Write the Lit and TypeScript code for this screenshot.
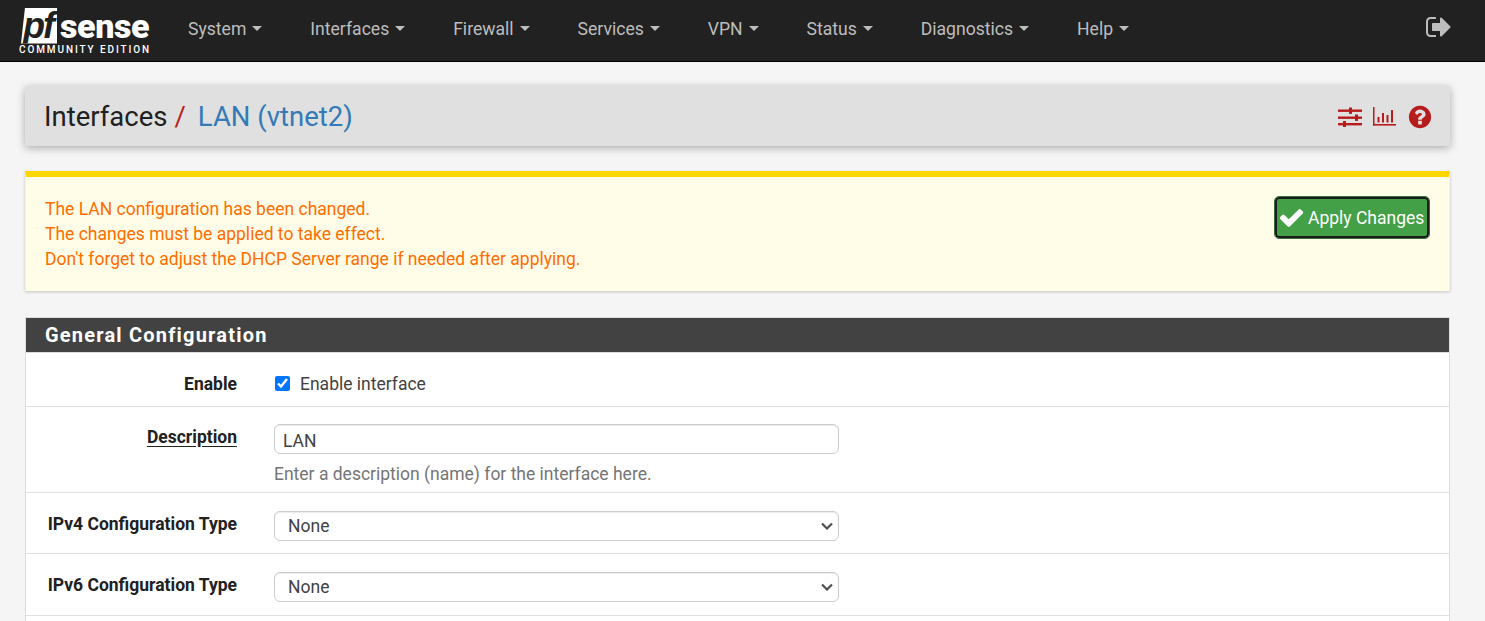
import { LitElement, css, html, svg } from "lit";
import { customElement } from "lit/decorators.js";

const MENU = ["System", "Interfaces", "Firewall", "Services", "VPN", "Status", "Diagnostics", "Help"];

const SIGN_OUT =
  "M704 1440q0 4 1 20t.5 26.5-3 23.5-10 19.5-20.5 6.5h-320q-119 0-203.5-84.5t-84.5-203.5v-704q0-119 84.5-203.5t203.5-84.5h320q13 0 22.5 9.5t9.5 22.5q0 4 1 20t.5 26.5-3 23.5-10 19.5-20.5 6.5h-320q-66 0-113 47t-47 113v704q0 66 47 113t113 47h312l11.5 1 11.5 3 8 5.5 7 9 2 13.5zm928-544q0 26-19 45l-544 544q-19 19-45 19t-45-19-19-45v-288h-448q-26 0-45-19t-19-45v-384q0-26 19-45t45-19h448v-288q0-26 19-45t45-19 45 19l544 544q19 19 19 45z";
const CHECK =
  "M1671 566q0 40-28 68l-724 724-136 136q-28 28-68 28t-68-28l-136-136-362-362q-28-28-28-68t28-68l136-136q28-28 68-28t68 28l294 295 656-657q28-28 68-28t68 28l136 136q28 28 28 68z";
const QUESTION =
  "M1024 1376v-192q0-14-9-23t-23-9h-192q-14 0-23 9t-9 23v192q0 14 9 23t23 9h192q14 0 23-9t9-23zm256-672q0-88-55.5-163t-138.5-116-170-41q-243 0-371 213-15 24 8 42l132 100q7 6 19 6 16 0 25-12 53-68 86-92 34-24 86-24 48 0 85.5 26t37.5 59q0 38-20 61t-68 45q-63 28-115.5 86.5t-52.5 125.5v36q0 14 9 23t23 9h192q14 0 23-9t9-23q0-19 21.5-49.5t54.5-49.5q32-18 49-28.5t46-35 44.5-48 28-60.5 12.5-81zm384 192q0 209-103 385.5t-279.5 279.5-385.5 103-385.5-103-279.5-279.5-103-385.5 103-385.5 279.5-279.5 385.5-103 385.5 103 279.5 279.5 103 385.5z";

const faIcon = (d: string, size: number) => html`
  <svg width=${size} height=${size} viewBox="0 0 1792 1792" fill="currentColor">${svg`<path d=${d}></path>`}</svg>
`;

@customElement("app-root")
export class AppRoot extends LitElement {
  static styles = css`
    :host {
      display: block;
      height: 621px;
      overflow: hidden;
      background: #f5f5f5;
      font-family: Roboto, "Liberation Sans", sans-serif;
      font-size: 17.5px;
      color: #212121;
    }

    .navbar {
      display: flex;
      align-items: center;
      height: 61px;
      padding: 0 32px 0 19px;
      background: #212121;
      border-bottom: 1px solid #000;
    }

    .brand {
      display: flex;
      flex-direction: column;
      width: 132px;
      color: #fff;
      margin-top: 2px;
    }
    .brand-top {
      display: flex;
      align-items: center;
      height: 36px;
      margin-left: 2px;
    }
    .pf {
      display: flex;
      align-items: center;
      justify-content: center;
      box-sizing: border-box;
      width: 36px;
      height: 36px;
      padding-right: 2px;
      background: #fff;
      color: #212121;
      font-family: "Liberation Sans", sans-serif;
      font-weight: 700;
      font-style: italic;
      font-size: 36px;
      letter-spacing: -2px;
      clip-path: polygon(4px 0, 100% 0, 100% 100%, 0 100%);
    }
    .sense {
      margin-left: 3px;
      font-weight: 900;
      font-size: 34px;
      letter-spacing: -0.4px;
      line-height: 36px;
    }
    .edition {
      font-weight: 500;
      font-size: 10px;
      line-height: 12px;
      letter-spacing: 1.9px;
      white-space: nowrap;
    }

    .menu {
      display: flex;
      margin-left: 37px;
      margin-top: -4px;
      gap: 47.9px;
      flex: 1;
    }
    .menu-item {
      display: flex;
      align-items: center;
      color: #bdbdbd;
      font-size: 17.6px;
    }
    .caret {
      width: 0;
      height: 0;
      margin-left: 6px;
      border-top: 5px solid currentColor;
      border-left: 5px solid transparent;
      border-right: 5px solid transparent;
    }
    .logout {
      display: flex;
      color: #bdbdbd;
      margin-top: -8px;
    }

    .page {
      padding: 24px 35px 0 25px;
    }

    .breadcrumb {
      display: flex;
      align-items: center;
      height: 60px;
      padding: 0 17px 0 19px;
      box-sizing: border-box;
      background: #e0e0e0;
      border-radius: 2px;
      box-shadow: 0 2px 8px rgba(0, 0, 0, 0.3);
      font-size: 27.5px;
    }
    .crumb-sep {
      color: #b71c1c;
      margin: 0 12px 0 7px;
    }
    .crumb-link {
      color: #337ab7;
    }
    .crumb-icons {
      display: flex;
      align-items: center;
      gap: 11px;
      margin-left: auto;
      margin-top: 2px;
      color: #b71c1c;
    }

    .alert {
      display: flex;
      justify-content: space-between;
      box-sizing: border-box;
      height: 120px;
      margin-top: 25px;
      padding: 26px 19px 0 19px;
      background: #fffde7;
      border-top: 6px solid #ffd600;
      border-left: 1px solid #fff3c4;
      border-right: 1px solid #fff3c4;
      box-shadow: 0 1px 3px rgba(0, 0, 0, 0.2);
      color: #ff6d00;
      line-height: 25px;
    }
    .alert-text {
      margin-top: -6px;
    }
    .apply {
      display: flex;
      align-items: center;
      gap: 3px;
      box-sizing: border-box;
      width: 154px;
      height: 41px;
      margin: -6px 1px 0 0;
      padding: 0 0 0 1px;
      background: #43a047;
      border: 2px solid #1b1b1b;
      outline: 1px solid #3c6e40;
      outline-offset: 0;
      border-radius: 4px;
      color: #fff;
      font-family: inherit;
      font-size: 17.5px;
      white-space: nowrap;
    }

    .panel {
      margin-top: 26px;
      background: #fff;
      border: 1px solid #ddd;
      border-bottom: none;
    }
    .panel-heading {
      height: 35px;
      padding-left: 19px;
      background: #424242;
      border-bottom: 1px solid #ddd;
      box-sizing: border-box;
      color: #fff;
      font-weight: 700;
      font-size: 20px;
      letter-spacing: 1.2px;
      line-height: 34px;
    }

    .row {
      display: grid;
      grid-template-columns: 211px 565px;
      column-gap: 37px;
      border-bottom: 1px solid #e0e0e0;
      box-sizing: border-box;
    }
    .row-label {
      text-align: right;
      font-weight: 700;
    }
    .row-label u {
      text-underline-offset: 3px;
    }

    .row-enable {
      height: 54px;
      padding-top: 8px;
      align-items: center;
    }
    .check {
      display: flex;
      align-items: center;
      gap: 10px;
      color: #424242;
    }
    .check input {
      width: 15px;
      height: 15px;
      margin: 0 0 0 1px;
    }

    .row-desc {
      height: 86px;
      padding-top: 17px;
    }
    .row-desc .row-label {
      line-height: 27px;
    }
    .field {
      display: block;
      box-sizing: border-box;
      width: 565px;
      height: 30px;
      padding: 3px 8px 0;
      background: #fff;
      border: 1px solid #ccc;
      border-radius: 6px;
      box-shadow: inset 0 1px 1px rgba(0, 0, 0, 0.08);
      color: #424242;
      font-family: inherit;
      font-size: 17.5px;
    }
    .help {
      margin-top: 10px;
      color: #757575;
      line-height: 20px;
    }

    .row-select {
      height: 61px;
      padding-top: 18px;
      align-items: start;
    }
    .row-select .row-label {
      margin-top: 3px;
      line-height: 20px;
    }
    .row-select .field {
      appearance: none;
      padding: 0 24px 0 13px;
      background: #fff
        url("data:image/svg+xml,%3Csvg xmlns='http://www.w3.org/2000/svg' width='12' height='8' viewBox='0 0 12 8'%3E%3Cpath d='M1 1.5l5 5 5-5' fill='none' stroke='%23505050' stroke-width='2.2'/%3E%3C/svg%3E")
        no-repeat right 5px top 50%;
    }
    .row-last {
      height: 62px;
    }
    .row-rest {
      height: 40px;
    }
  `;

  private renderSliders() {
    return html`<svg width="24" height="20" viewBox="0 0 24 20" fill="currentColor">
      ${svg`<rect x="0" y="2.5" width="24" height="2.4"></rect>
      <rect x="11" y="0.5" width="3" height="6.4"></rect>
      <rect x="0" y="9.5" width="24" height="2.4"></rect>
      <rect x="17" y="7.5" width="3" height="6.4"></rect>
      <rect x="0" y="16" width="24" height="2.4"></rect>
      <rect x="5" y="14" width="3" height="6"></rect>`}
    </svg>`;
  }

  private renderChart() {
    return html`<svg width="23" height="20" viewBox="0 0 23 20" fill="currentColor">
      ${svg`<rect x="0" y="0" width="1.5" height="18.5"></rect>
      <rect x="0" y="17" width="23" height="1.6"></rect>
      <rect x="4.5" y="10" width="2" height="5.5"></rect>
      <rect x="9" y="6" width="2" height="9.5"></rect>
      <rect x="13.5" y="8" width="2" height="7.5"></rect>
      <rect x="18" y="3" width="2" height="12.5"></rect>`}
    </svg>`;
  }

  render() {
    return html`
      <nav class="navbar">
        <div class="brand">
          <div class="brand-top"><span class="pf">pf</span><span class="sense">sense</span></div>
          <div class="edition">COMMUNITY EDITION</div>
        </div>
        <div class="menu">
          ${MENU.map((m) => html`<div class="menu-item">${m}<span class="caret"></span></div>`)}
        </div>
        <div class="logout">${faIcon(SIGN_OUT, 28)}</div>
      </nav>

      <div class="page">
        <div class="breadcrumb">
          <span>Interfaces</span><span class="crumb-sep">/</span><span class="crumb-link">LAN (vtnet2)</span>
          <div class="crumb-icons">${this.renderSliders()} ${this.renderChart()} ${faIcon(QUESTION, 26)}</div>
        </div>

        <div class="alert">
          <div class="alert-text">
            The LAN configuration has been changed.<br />
            The changes must be applied to take effect.<br />
            Don't forget to adjust the DHCP Server range if needed after applying.
          </div>
          <button class="apply">${faIcon(CHECK, 27)}<span>Apply Changes</span></button>
        </div>

        <div class="panel">
          <div class="panel-heading">General Configuration</div>

          <div class="row row-enable">
            <div class="row-label">Enable</div>
            <label class="check"><input type="checkbox" checked />Enable interface</label>
          </div>

          <div class="row row-desc">
            <div class="row-label"><u>Description</u></div>
            <div>
              <input class="field" type="text" value="LAN" />
              <div class="help">Enter a description (name) for the interface here.</div>
            </div>
          </div>

          <div class="row row-select">
            <div class="row-label">IPv4 Configuration Type</div>
            <select class="field"><option>None</option></select>
          </div>

          <div class="row row-select row-last">
            <div class="row-label">IPv6 Configuration Type</div>
            <select class="field"><option>None</option></select>
          </div>

          <div class="row-rest"></div>
        </div>
      </div>
    `;
  }
}
